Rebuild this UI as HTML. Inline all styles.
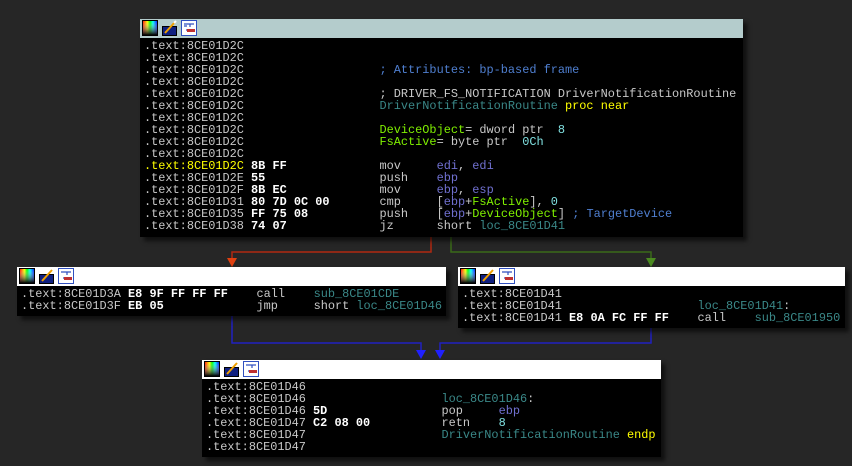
<!DOCTYPE html>
<html><head><meta charset="utf-8"><style>
html,body{margin:0;padding:0;width:852px;height:466px;background:#262626;overflow:hidden;}
.box{position:absolute;background:#000;box-shadow:4px 4px 4px rgba(0,0,0,0.6);}
.hdr{height:19px;background:#fff;position:relative;}
.main .hdr{background:#b4cccc;}
.hdr svg{position:absolute;top:1px;}
.body{padding:2px 0 0 4px;font-family:"Liberation Mono",monospace;font-size:11.9px;line-height:12px;color:#c8c8c8;white-space:pre;}
.b{color:#fff;font-weight:bold}
.c{color:#4f7fd0}
.t{color:#3a8888}
.y{color:#ffff00}
.g{color:#80f000}
.r{color:#7070d0}
.n{color:#80e0e0}
.h{color:#ffff00}
</style></head><body>
<svg width="852" height="466" style="position:absolute;left:0;top:0">
<polyline points="431,237 431,252 232,252 232,262" fill="none" stroke="#b02810" stroke-width="1.5"/>
<polygon points="227,258 237,258 232,267" fill="#e04010"/>
<polyline points="451,237 451,252 651,252 651,262" fill="none" stroke="#3a6a18" stroke-width="1.5"/>
<polygon points="646,258 656,258 651,267" fill="#4a8a20"/>
<polyline points="232,316 232,343 421,343 421,354" fill="none" stroke="#2020c0" stroke-width="1.5"/>
<polygon points="416,350 426,350 421,359" fill="#2020ff"/>
<polyline points="651,328 651,343 440,343 440,354" fill="none" stroke="#2020c0" stroke-width="1.5"/>
<polygon points="435,350 445,350 440,359" fill="#2020ff"/>
</svg>

<div class="box main" style="left:140px;top:19px;width:603px;height:218px;">
<div class="hdr">
<svg style="left:2px" width="58" height="17">
<defs><linearGradient id="gA" x1="0" x2="1"><stop offset="0" stop-color="#f00"/><stop offset=".33" stop-color="#ff0"/><stop offset=".5" stop-color="#0f0"/><stop offset=".7" stop-color="#0ff"/><stop offset="1" stop-color="#00f"/></linearGradient><linearGradient id="gB" x1="0" y1="0" x2="0" y2="1"><stop offset="0" stop-color="#fff" stop-opacity="0"/><stop offset="1" stop-color="#000"/></linearGradient></defs>
<rect x="0.5" y="0.5" width="15" height="15" fill="url(#gA)" stroke="#000"/><rect x="1" y="1" width="14" height="14" fill="url(#gB)"/>
<rect x="20.5" y="6.5" width="14" height="9" fill="#102080" stroke="#000"/><line x1="23" y1="13" x2="33" y2="2" stroke="#f0a000" stroke-width="2"/><line x1="32" y1="3" x2="34" y2="1" stroke="#fff" stroke-width="2"/>
<rect x="39.5" y="0.5" width="15" height="15" fill="#fff" stroke="#3050c0"/><path d="M42 4h10M42 6l3 0M48 4v3M44 10h8" stroke="#3050c0" stroke-width="1.2" fill="none"/><rect x="45" y="9" width="8" height="3" fill="#c03030"/>
</svg></div>
<div class="body">.text:8CE01D2C
.text:8CE01D2C
.text:8CE01D2C                   <span class="c">; Attributes: bp-based frame</span>
.text:8CE01D2C
.text:8CE01D2C                   ; DRIVER_FS_NOTIFICATION DriverNotificationRoutine
.text:8CE01D2C                   <span class="t">DriverNotificationRoutine</span> <span class="y">proc near</span>
.text:8CE01D2C
.text:8CE01D2C                   <span class="g">DeviceObject</span>= dword ptr  <span class="n">8</span>
.text:8CE01D2C                   <span class="g">FsActive</span>= byte ptr  <span class="n">0Ch</span>
.text:8CE01D2C
<span class="h">.text:8CE01D2C</span> <span class="b">8B FF</span>             mov     <span class="r">edi</span>, <span class="r">edi</span>
.text:8CE01D2E <span class="b">55</span>                push    <span class="r">ebp</span>
.text:8CE01D2F <span class="b">8B EC</span>             mov     <span class="r">ebp</span>, <span class="r">esp</span>
.text:8CE01D31 <span class="b">80 7D 0C 00</span>       cmp     [<span class="r">ebp</span>+<span class="g">FsActive</span>], <span class="n">0</span>
.text:8CE01D35 <span class="b">FF 75 08</span>          push    [<span class="r">ebp</span>+<span class="g">DeviceObject</span>] <span class="c">; TargetDevice</span>
.text:8CE01D38 <span class="b">74 07</span>             jz      short <span class="t">loc_8CE01D41</span></div>
</div>

<div class="box" style="left:17px;top:267px;width:429px;height:49px;">
<div class="hdr"><svg style="left:2px" width="58" height="17">
<rect x="0.5" y="0.5" width="15" height="15" fill="url(#gA)" stroke="#000"/><rect x="1" y="1" width="14" height="14" fill="url(#gB)"/>
<rect x="20.5" y="6.5" width="14" height="9" fill="#102080" stroke="#000"/><line x1="23" y1="13" x2="33" y2="2" stroke="#f0a000" stroke-width="2"/>
<rect x="39.5" y="0.5" width="15" height="15" fill="#fff" stroke="#3050c0"/><path d="M42 4h10M48 4v3M44 10h8" stroke="#3050c0" stroke-width="1.2" fill="none"/><rect x="45" y="9" width="8" height="3" fill="#c03030"/></svg></div>
<div class="body">.text:8CE01D3A <span class="b">E8 9F FF FF FF</span>    call    <span class="t">sub_8CE01CDE</span>
.text:8CE01D3F <span class="b">EB 05</span>             jmp     short <span class="t">loc_8CE01D46</span></div>
</div>

<div class="box" style="left:458px;top:267px;width:387px;height:61px;">
<div class="hdr"><svg style="left:2px" width="58" height="17">
<rect x="0.5" y="0.5" width="15" height="15" fill="url(#gA)" stroke="#000"/><rect x="1" y="1" width="14" height="14" fill="url(#gB)"/>
<rect x="20.5" y="6.5" width="14" height="9" fill="#102080" stroke="#000"/><line x1="23" y1="13" x2="33" y2="2" stroke="#f0a000" stroke-width="2"/>
<rect x="39.5" y="0.5" width="15" height="15" fill="#fff" stroke="#3050c0"/><path d="M42 4h10M48 4v3M44 10h8" stroke="#3050c0" stroke-width="1.2" fill="none"/><rect x="45" y="9" width="8" height="3" fill="#c03030"/></svg></div>
<div class="body">.text:8CE01D41
.text:8CE01D41                   <span class="t">loc_8CE01D41</span>:
.text:8CE01D41 <span class="b">E8 0A FC FF FF</span>    call    <span class="t">sub_8CE01950</span></div>
</div>

<div class="box" style="left:202px;top:360px;width:459px;height:97px;">
<div class="hdr"><svg style="left:2px" width="58" height="17">
<rect x="0.5" y="0.5" width="15" height="15" fill="url(#gA)" stroke="#000"/><rect x="1" y="1" width="14" height="14" fill="url(#gB)"/>
<rect x="20.5" y="6.5" width="14" height="9" fill="#102080" stroke="#000"/><line x1="23" y1="13" x2="33" y2="2" stroke="#f0a000" stroke-width="2"/>
<rect x="39.5" y="0.5" width="15" height="15" fill="#fff" stroke="#3050c0"/><path d="M42 4h10M48 4v3M44 10h8" stroke="#3050c0" stroke-width="1.2" fill="none"/><rect x="45" y="9" width="8" height="3" fill="#c03030"/></svg></div>
<div class="body">.text:8CE01D46
.text:8CE01D46                   <span class="t">loc_8CE01D46</span>:
.text:8CE01D46 <span class="b">5D</span>                pop     <span class="r">ebp</span>
.text:8CE01D47 <span class="b">C2 08 00</span>          retn    <span class="n">8</span>
.text:8CE01D47                   <span class="t">DriverNotificationRoutine</span> <span class="y">endp</span>
.text:8CE01D47</div>
</div>
</body></html>
